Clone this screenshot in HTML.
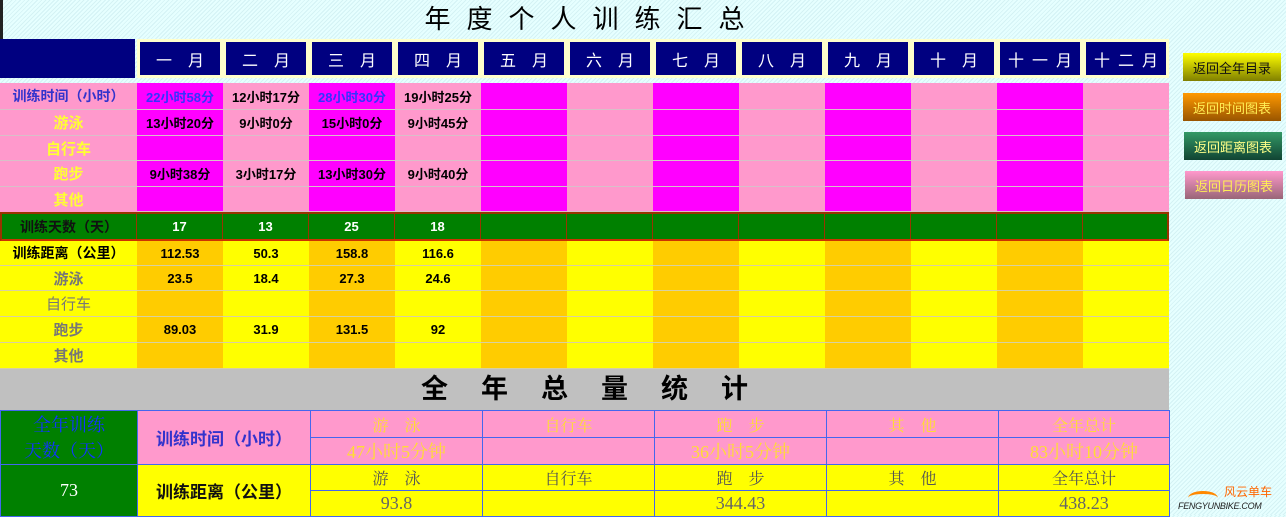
<!DOCTYPE html>
<html><head><meta charset="utf-8"><style>
*{margin:0;padding:0;box-sizing:border-box}
body{width:1286px;height:515px;overflow:hidden;position:relative;font-family:"Liberation Sans","Noto Sans CJK SC",sans-serif;font-weight:bold;
background:repeating-linear-gradient(135deg,#e6ffff 0 2px,#d4f2f4 2px 3px);}
.a{position:absolute}
.row{position:absolute;left:0;display:flex;width:1169px}
.row div{flex:none;display:flex;align-items:center;justify-content:center;font-size:13px;white-space:nowrap}
.L{width:137px}.M{width:86px}
.hd div.M{background:#000080;color:#fff;border:3px solid #ffffcc;font-weight:normal;font-size:16px;letter-spacing:16px;padding-left:16px}
.t div{border-bottom:1px solid #d8c0c8}
.mg{background:#ff00ff}.pk{background:#ff99cc}.or{background:#ffcc00}.ye{background:#ffff00}
.d div{border-bottom:1px solid #d8d0a0}
.btn{position:absolute;left:1183px;width:98px;height:28px;font-size:13px;font-weight:normal;display:flex;align-items:center;justify-content:center}
table{position:absolute;left:0;top:410px;border-collapse:collapse;table-layout:fixed;font-family:"Liberation Serif","Noto Serif CJK SC",serif;font-weight:normal}
td{border:1px solid #4466ee;text-align:center;font-size:16px;padding:0}
</style></head><body>
<div class="a" style="left:0;top:0;width:3px;height:40px;background:#222"></div>
<div class="a" style="left:0;top:0;width:1169px;height:39px;text-align:center;font-size:26px;font-weight:normal;line-height:38px;letter-spacing:16px;padding-left:16px">年度个人训练汇总</div>
<div class="row hd" style="top:39px;height:39px"><div class="L" style="background:#000080;width:135px;margin-right:2px"></div>
<div class="M">一月</div><div class="M">二月</div><div class="M">三月</div><div class="M">四月</div><div class="M">五月</div><div class="M">六月</div><div class="M">七月</div><div class="M">八月</div><div class="M">九月</div><div class="M">十月</div><div class="M" style="letter-spacing:8px;padding-left:8px">十一月</div><div class="M" style="letter-spacing:8px;padding-left:8px">十二月</div></div>

<div class="row t" style="top:83px;height:27px"><div class="L pk" style="color:#3333cc;font-size:14px">训练时间（小时）</div><div class="M mg" style="color:#3333ff">22小时58分</div><div class="M pk">12小时17分</div><div class="M mg" style="color:#3333ff">28小时30分</div><div class="M pk">19小时25分</div><div class="M mg"></div><div class="M pk"></div><div class="M mg"></div><div class="M pk"></div><div class="M mg"></div><div class="M pk"></div><div class="M mg"></div><div class="M pk"></div></div>
<div class="row t" style="top:110px;height:26px"><div class="L pk" style="color:#ffff33;font-size:15px">游泳</div><div class="M mg">13小时20分</div><div class="M pk">9小时0分</div><div class="M mg">15小时0分</div><div class="M pk">9小时45分</div><div class="M mg"></div><div class="M pk"></div><div class="M mg"></div><div class="M pk"></div><div class="M mg"></div><div class="M pk"></div><div class="M mg"></div><div class="M pk"></div></div>
<div class="row t" style="top:136px;height:25px"><div class="L pk" style="color:#ffff33;font-size:15px">自行车</div><div class="M mg"></div><div class="M pk"></div><div class="M mg"></div><div class="M pk"></div><div class="M mg"></div><div class="M pk"></div><div class="M mg"></div><div class="M pk"></div><div class="M mg"></div><div class="M pk"></div><div class="M mg"></div><div class="M pk"></div></div>
<div class="row t" style="top:161px;height:26px"><div class="L pk" style="color:#ffff33;font-size:15px">跑步</div><div class="M mg">9小时38分</div><div class="M pk">3小时17分</div><div class="M mg">13小时30分</div><div class="M pk">9小时40分</div><div class="M mg"></div><div class="M pk"></div><div class="M mg"></div><div class="M pk"></div><div class="M mg"></div><div class="M pk"></div><div class="M mg"></div><div class="M pk"></div></div>
<div class="row t" style="top:187px;height:25px"><div class="L pk" style="color:#ffff33;border:0;font-size:15px">其他</div><div class="M mg"></div><div class="M pk"></div><div class="M mg"></div><div class="M pk"></div><div class="M mg"></div><div class="M pk"></div><div class="M mg"></div><div class="M pk"></div><div class="M mg"></div><div class="M pk"></div><div class="M mg"></div><div class="M pk"></div></div>

<div class="row" style="top:212px;height:29px;background:#008000;border:2px solid #993300;border-bottom-color:#cc3300"><div class="L" style="color:#111;width:135px;border-right:1px solid #993300;font-size:14px">训练天数（天）</div><div class="M" style="color:#fff;border-right:1px solid #993300">17</div><div class="M" style="color:#fff;border-right:1px solid #993300">13</div><div class="M" style="color:#fff;border-right:1px solid #993300">25</div><div class="M" style="color:#fff;border-right:1px solid #993300">18</div><div class="M" style="border-right:1px solid #993300"></div><div class="M" style="border-right:1px solid #993300"></div><div class="M" style="border-right:1px solid #993300"></div><div class="M" style="border-right:1px solid #993300"></div><div class="M" style="border-right:1px solid #993300"></div><div class="M" style="border-right:1px solid #993300"></div><div class="M" style="border-right:1px solid #993300"></div></div>

<div class="row d" style="top:241px;height:25px"><div class="L ye" style="font-size:14px">训练距离（公里）</div><div class="M or">112.53</div><div class="M ye">50.3</div><div class="M or">158.8</div><div class="M ye">116.6</div><div class="M or"></div><div class="M ye"></div><div class="M or"></div><div class="M ye"></div><div class="M or"></div><div class="M ye"></div><div class="M or"></div><div class="M ye"></div></div>
<div class="row d" style="top:266px;height:25px"><div class="L ye" style="color:#777;font-size:15px">游泳</div><div class="M or">23.5</div><div class="M ye">18.4</div><div class="M or">27.3</div><div class="M ye">24.6</div><div class="M or"></div><div class="M ye"></div><div class="M or"></div><div class="M ye"></div><div class="M or"></div><div class="M ye"></div><div class="M or"></div><div class="M ye"></div></div>
<div class="row d" style="top:291px;height:26px"><div class="L ye" style="color:#777;font-weight:normal;font-size:15px">自行车</div><div class="M or"></div><div class="M ye"></div><div class="M or"></div><div class="M ye"></div><div class="M or"></div><div class="M ye"></div><div class="M or"></div><div class="M ye"></div><div class="M or"></div><div class="M ye"></div><div class="M or"></div><div class="M ye"></div></div>
<div class="row d" style="top:317px;height:26px"><div class="L ye" style="color:#777;font-size:15px">跑步</div><div class="M or">89.03</div><div class="M ye">31.9</div><div class="M or">131.5</div><div class="M ye">92</div><div class="M or"></div><div class="M ye"></div><div class="M or"></div><div class="M ye"></div><div class="M or"></div><div class="M ye"></div><div class="M or"></div><div class="M ye"></div></div>
<div class="row d" style="top:343px;height:26px"><div class="L ye" style="color:#777;font-size:15px">其他</div><div class="M or"></div><div class="M ye"></div><div class="M or"></div><div class="M ye"></div><div class="M or"></div><div class="M ye"></div><div class="M or"></div><div class="M ye"></div><div class="M or"></div><div class="M ye"></div><div class="M or"></div><div class="M ye"></div></div>

<div class="a" style="left:0;top:369px;width:1169px;height:41px;background:#c0c0c0;text-align:center;font-size:27px;line-height:41px;letter-spacing:33px;padding-left:33px">全年总量统计</div>

<table>
<colgroup><col style="width:137px"><col style="width:173px"><col style="width:172px"><col style="width:172px"><col style="width:172px"><col style="width:172px"><col style="width:171px"></colgroup>
<tr style="height:27px;background:#ff99cc;color:#ffdd33"><td rowspan="2" style="background:#008000;color:#1133ff;font-size:18px;line-height:26px">全年训练<br>天数（天）</td><td rowspan="2" style="color:#3333cc;font-size:17px;font-family:'Liberation Sans','Noto Sans CJK SC',sans-serif;font-weight:bold">训练时间（小时）</td><td>游　泳</td><td>自行车</td><td>跑　步</td><td>其　他</td><td>全年总计</td></tr>
<tr style="height:26px;background:#ff99cc;color:#ffdd33"><td style="font-size:18px">47小时5分钟</td><td></td><td style="font-size:18px">36小时5分钟</td><td></td><td style="font-size:18px">83小时10分钟</td></tr>
<tr style="height:26px;background:#ffff00;color:#555"><td rowspan="2" style="background:#008000;color:#fff;font-size:18px">73</td><td rowspan="2" style="color:#111;font-size:17px;font-family:'Liberation Sans','Noto Sans CJK SC',sans-serif;font-weight:bold">训练距离（公里）</td><td>游　泳</td><td>自行车</td><td>跑　步</td><td>其　他</td><td>全年总计</td></tr>
<tr style="height:26px;background:#ffff00;color:#666"><td style="font-size:18px">93.8</td><td></td><td style="font-size:18px">344.43</td><td></td><td style="font-size:18px">438.23</td></tr>
</table>

<div class="btn" style="top:53px;background:linear-gradient(#ffff00,#808000);color:#111">返回全年目录</div>
<div class="btn" style="top:93px;background:linear-gradient(#ff9900,#995500);color:#ffee55">返回时间图表</div>
<div class="btn" style="top:132px;left:1184px;background:linear-gradient(#339966,#114433);color:#ffff88">返回距离图表</div>
<div class="btn" style="top:171px;left:1185px;background:linear-gradient(#ff99cc,#996677);color:#ffee55">返回日历图表</div>

<div class="a" style="left:1178px;top:483px;width:105px;height:32px;font-weight:normal">
<div class="a" style="left:10px;top:8px;width:30px;height:14px;border-top:3px solid #ff8800;border-radius:50% 50% 0 0"></div>
<div class="a" style="left:46px;top:0;font-size:12px;color:#ff6600">风云单车</div>
<div class="a" style="left:0;top:18px;font-size:9px;font-style:italic;color:#222;letter-spacing:-0.3px">FENGYUNBIKE.COM</div>
</div>
</body></html>
